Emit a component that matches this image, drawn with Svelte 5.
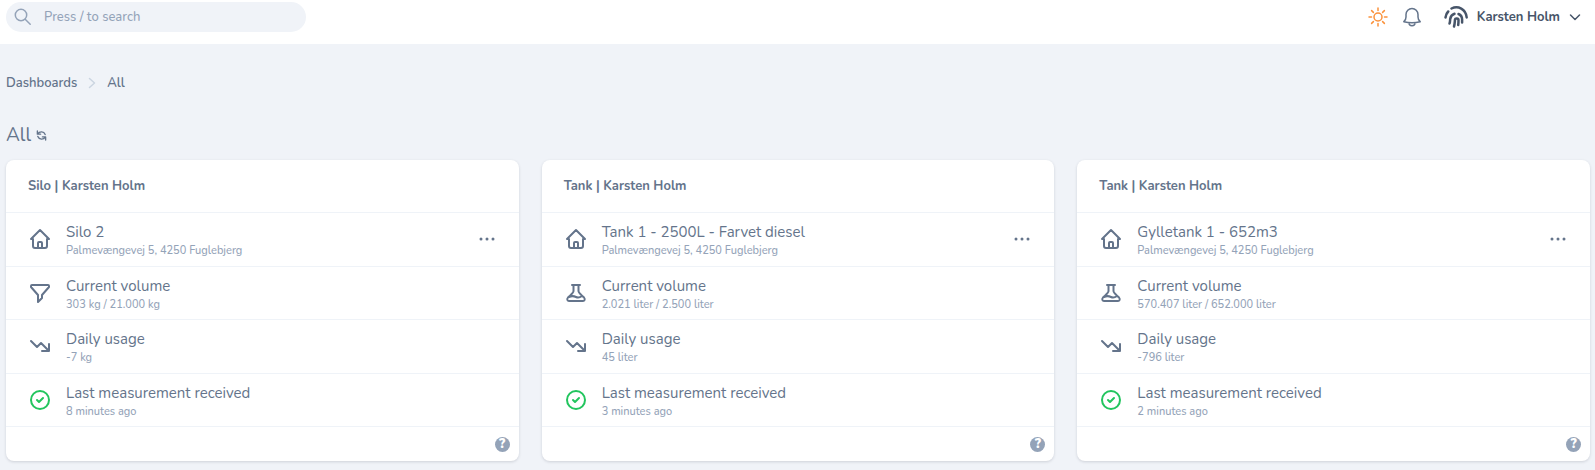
<script lang="ts">
  type RowIcon = 'home' | 'filter' | 'flask' | 'trend' | 'check';

  type Row = {
    icon: RowIcon;
    title: string;
    detail: string;
    menu?: boolean;
  };

  type Card = {
    id: number;
    heading: string;
    rows: Row[];
  };

  const address = 'Palmevængevej 5, 4250 Fuglebjerg';

  const icons: Record<RowIcon, string> = {
    home: 'M5 12H3l9-9 9 9h-2M5 12v7a2 2 0 0 0 2 2h10a2 2 0 0 0 2-2v-7M10 21v-5a1 1 0 0 1 1-1h2a1 1 0 0 1 1 1v5',
    filter: 'M4 4h16a1 1 0 0 1 1 1v1l-7 8v3l-4 4v-7L3 6V5a1 1 0 0 1 1-1z',
    flask: 'M8 4h8M9.500 4v6c0 2-3 4-5.500 6.500C2.500 18.500 3.500 20 5 20h14c1.500 0 2.500-1.500 1-3.500C17.500 14 14.500 12 14.500 10V4M5 16c3-1.500 5-1 7 0s4 .5 6-1',
    trend: 'M3 7l6 6 4-4 8 8M21 10v7h-7',
    check: 'M21 12a9 9 0 1 1-18 0 9 9 0 0 1 18 0zM9 12l2 2 4-4'
  };

  function buildCard(id: number, heading: string, name: string, icon: RowIcon, volume: string, usage: string, received: string): Card {
    return {
      id,
      heading,
      rows: [
        { icon: 'home', title: name, detail: address, menu: true },
        { icon, title: 'Current volume', detail: volume },
        { icon: 'trend', title: 'Daily usage', detail: usage },
        { icon: 'check', title: 'Last measurement received', detail: received }
      ]
    };
  }

  const cards: Card[] = [
    buildCard(1, 'Silo | Karsten Holm', 'Silo 2', 'filter', '303 kg / 21.000 kg', '-7 kg', '8 minutes ago'),
    buildCard(2, 'Tank | Karsten Holm', 'Tank 1 - 2500L - Farvet diesel', 'flask', '2.021 liter / 2.500 liter', '45 liter', '3 minutes ago'),
    buildCard(3, 'Tank | Karsten Holm', 'Gylletank 1 - 652m3', 'flask', '570.407 liter / 652.000 liter', '-796 liter', '2 minutes ago')
  ];

  let query = $state('');
  let searchInput: HTMLInputElement;

  function handleKeyDown(event: KeyboardEvent) {
    if (event.key === '/' && document.activeElement !== searchInput) {
      event.preventDefault();
      searchInput.focus();
    }
  }
</script>

<svelte:window onkeydown={handleKeyDown} />

<div class="page">
  <header class="topbar">
    <label class="search">
      <svg class="search-icon" viewBox="0 0 18 18" aria-hidden="true">
        <circle cx="7" cy="7" r="5.700" />
        <path d="M11.200 11.200l5 5" />
      </svg>
      <input type="text" placeholder="Press / to search" aria-label="Search" bind:value={query} bind:this={searchInput} />
    </label>

    <div class="actions">
      <button class="icon-button sun" aria-label="Toggle theme">
        <svg viewBox="0 0 20 20">
          <circle cx="10" cy="10" r="4" />
          <path d="M10 1v2.500M10 16.500V19M1 10h2.500M16.500 10H19M3.600 3.600l1.800 1.800M14.600 14.600l1.800 1.800M3.600 16.400l1.800-1.800M14.600 5.400l1.800-1.800" />
        </svg>
      </button>
      <button class="icon-button bell" aria-label="Notifications">
        <svg viewBox="0 0 20 20">
          <path d="M1.800 14.700C3.400 13.500 4 12 4 10V7.500a6 6 0 0 1 12 0V10c0 2 .6 3.500 2.200 4.700-5 1.300-11.400 1.300-16.400 0zM7 15.700a3 3 0 0 0 6 0" />
        </svg>
      </button>
      <button class="user">
        <svg class="fingerprint" viewBox="0 0 24 24" aria-hidden="true">
          <path d="M1.500 12.500c.3-2.500 1.200-4.500 2.700-6M7.500 3.500C14 .2 22 4 22.700 12.500" />
          <path d="M5.500 18.500c.7-1.500.5-3 .7-4.500.4-2.600 2-4.500 4.300-5.200M14.500 9c2.500 1 3.600 3 3.600 5.500v3" />
          <path d="M10 21.500c.8-2.500.7-4.500 1-7 .2-1.600 3.500-1.500 3.500.5 0 1.500 0 3-.3 5" />
        </svg>
        <span>Karsten Holm</span>
        <svg class="chevron" viewBox="0 0 12 12" aria-hidden="true">
          <path d="M1.500 4L6 8.500 10.500 4" />
        </svg>
      </button>
    </div>
  </header>

  <main>
    <nav class="breadcrumb" aria-label="Breadcrumb">
      <a href="#dashboards">Dashboards</a>
      <svg viewBox="0 0 12 12" aria-hidden="true"><path d="M3.500 1.500L8.500 6l-5 4.500" /></svg>
      <a href="#all" aria-current="page">All</a>
    </nav>

    <div class="title">
      <h1>All</h1>
      <button class="refresh" aria-label="Refresh">
        <svg viewBox="0 0 12 12">
          <path d="M1.500 1v3.500H5M1.800 4.300C4 1.200 8.500 1.300 10 5M10.500 11V7.500H7M10.200 7.700C8 10.800 3.500 10.700 2 7" />
        </svg>
      </button>
    </div>

    <div class="cards">
      {#each cards as card (card.id)}
        <section class="card">
          <h2>{card.heading}</h2>
          <ul>
            {#each card.rows as row}
              <li>
                <svg class="row-icon" class:ok={row.icon === 'check'} viewBox="0 0 24 24" aria-hidden="true">
                  <path d={icons[row.icon]} />
                </svg>
                <div class="row-text">
                  <span class="row-title">{row.title}</span>
                  <span class="row-detail">{row.detail}</span>
                </div>
                {#if row.menu}
                  <button class="menu" aria-label="More options">
                    <svg viewBox="0 0 20 20">
                      <circle cx="4" cy="10" r="1.500" />
                      <circle cx="10" cy="10" r="1.500" />
                      <circle cx="16" cy="10" r="1.500" />
                    </svg>
                  </button>
                {/if}
              </li>
            {/each}
          </ul>
          <footer>
            <button class="help" aria-label="Help">?</button>
          </footer>
        </section>
      {/each}
    </div>
  </main>
</div>

<style>
  :global(body) {
    margin: 0;
    background: #f0f3f8;
  }

  .page {
    font-family: Nunito, Lato, 'Noto Sans', sans-serif;
    font-size: 13px;
    line-height: 20px;
    color: #64748b;
  }

  svg {
    display: block;
    flex: none;
    fill: none;
    stroke: currentColor;
    stroke-width: 2;
    stroke-linecap: round;
    stroke-linejoin: round;
  }

  button {
    display: flex;
    align-items: center;
    padding: 0;
    border: none;
    background: transparent;
    font: inherit;
    color: inherit;
    cursor: pointer;
  }

  .topbar {
    display: flex;
    align-items: flex-start;
    justify-content: space-between;
    box-sizing: border-box;
    height: 44px;
    padding: 2px 14px 0 6px;
    background: #fff;
  }

  .search {
    display: flex;
    align-items: center;
    gap: 12px;
    box-sizing: border-box;
    width: 300px;
    height: 30px;
    padding: 0 16px 0 8px;
    border-radius: 15px;
    background: #f0f3f8;
  }

  .search-icon {
    width: 18px;
    height: 18px;
    color: #94a3b8;
    stroke-width: 1.5;
  }

  .search input {
    flex: 1;
    min-width: 0;
    padding: 0;
    border: none;
    outline: none;
    background: transparent;
    font: inherit;
    font-weight: 500;
    color: #64748b;
  }

  .search input::placeholder {
    color: #94a3b8;
    opacity: 1;
  }

  .actions {
    display: flex;
    align-items: center;
    height: 30px;
  }

  .icon-button svg {
    width: 20px;
    height: 20px;
    stroke-width: 1.5;
  }

  .sun {
    margin-right: 14px;
    color: #fb923c;
  }

  .bell {
    margin-right: 22px;
  }

  .user {
    gap: 9px;
    font-weight: 700;
    color: #475569;
  }

  .fingerprint {
    width: 24px;
    height: 24px;
    stroke-width: 2.5;
  }

  .chevron {
    width: 12px;
    height: 12px;
    stroke-width: 1.5;
  }

  main {
    padding: 29px 5px 9px 6px;
  }

  .breadcrumb {
    display: flex;
    align-items: center;
    gap: 9px;
  }

  .breadcrumb a {
    color: inherit;
    font-weight: 600;
    text-decoration: none;
  }

  .breadcrumb svg {
    width: 12px;
    height: 12px;
    color: #cbd5e1;
    stroke-width: 1.5;
  }

  .title {
    display: flex;
    align-items: center;
    gap: 5px;
    padding: 28px 0 11px;
  }

  h1 {
    margin: 0;
    font-size: 19px;
    line-height: 28px;
    font-weight: 400;
  }

  .refresh svg {
    width: 11px;
    height: 11px;
    stroke-width: 1.5;
  }

  .cards {
    display: grid;
    grid-template-columns: repeat(3, 1fr);
    gap: 23px;
  }

  .card {
    border-radius: 8px;
    background: #fff;
    box-shadow: 0 1px 3px rgba(15, 23, 42, 0.15);
  }

  h2 {
    margin: 0;
    padding: 16px 22px;
    border-bottom: 1px solid #eff3f8;
    font-size: 13px;
    line-height: 20px;
    font-weight: 700;
  }

  ul {
    display: grid;
    grid-auto-rows: 1fr;
    min-height: 214px;
    margin: 0;
    padding: 0;
    list-style: none;
  }

  li {
    display: flex;
    align-items: center;
    gap: 14px;
    padding: 0 22px;
    border-bottom: 1px solid #eff3f8;
  }

  .row-icon {
    width: 24px;
    height: 24px;
  }

  .row-icon.ok {
    color: #22c55e;
  }

  .row-text {
    display: flex;
    flex: 1;
    flex-direction: column;
    min-width: 0;
    padding-top: 4px;
  }

  .row-title {
    font-size: 15px;
    line-height: 20px;
  }

  .row-detail {
    font-size: 11px;
    line-height: 18px;
    font-weight: 500;
    color: #94a3b8;
  }

  .menu svg {
    width: 20px;
    height: 20px;
    fill: currentColor;
    stroke: none;
  }

  footer {
    display: flex;
    justify-content: flex-end;
    align-items: center;
    height: 34px;
    padding-right: 9px;
  }

  .help {
    justify-content: center;
    width: 15px;
    height: 15px;
    border-radius: 50%;
    background: #94a3b8;
    font-size: 13px;
    line-height: 15px;
    font-weight: 900;
    color: #fff;
  }
</style>
